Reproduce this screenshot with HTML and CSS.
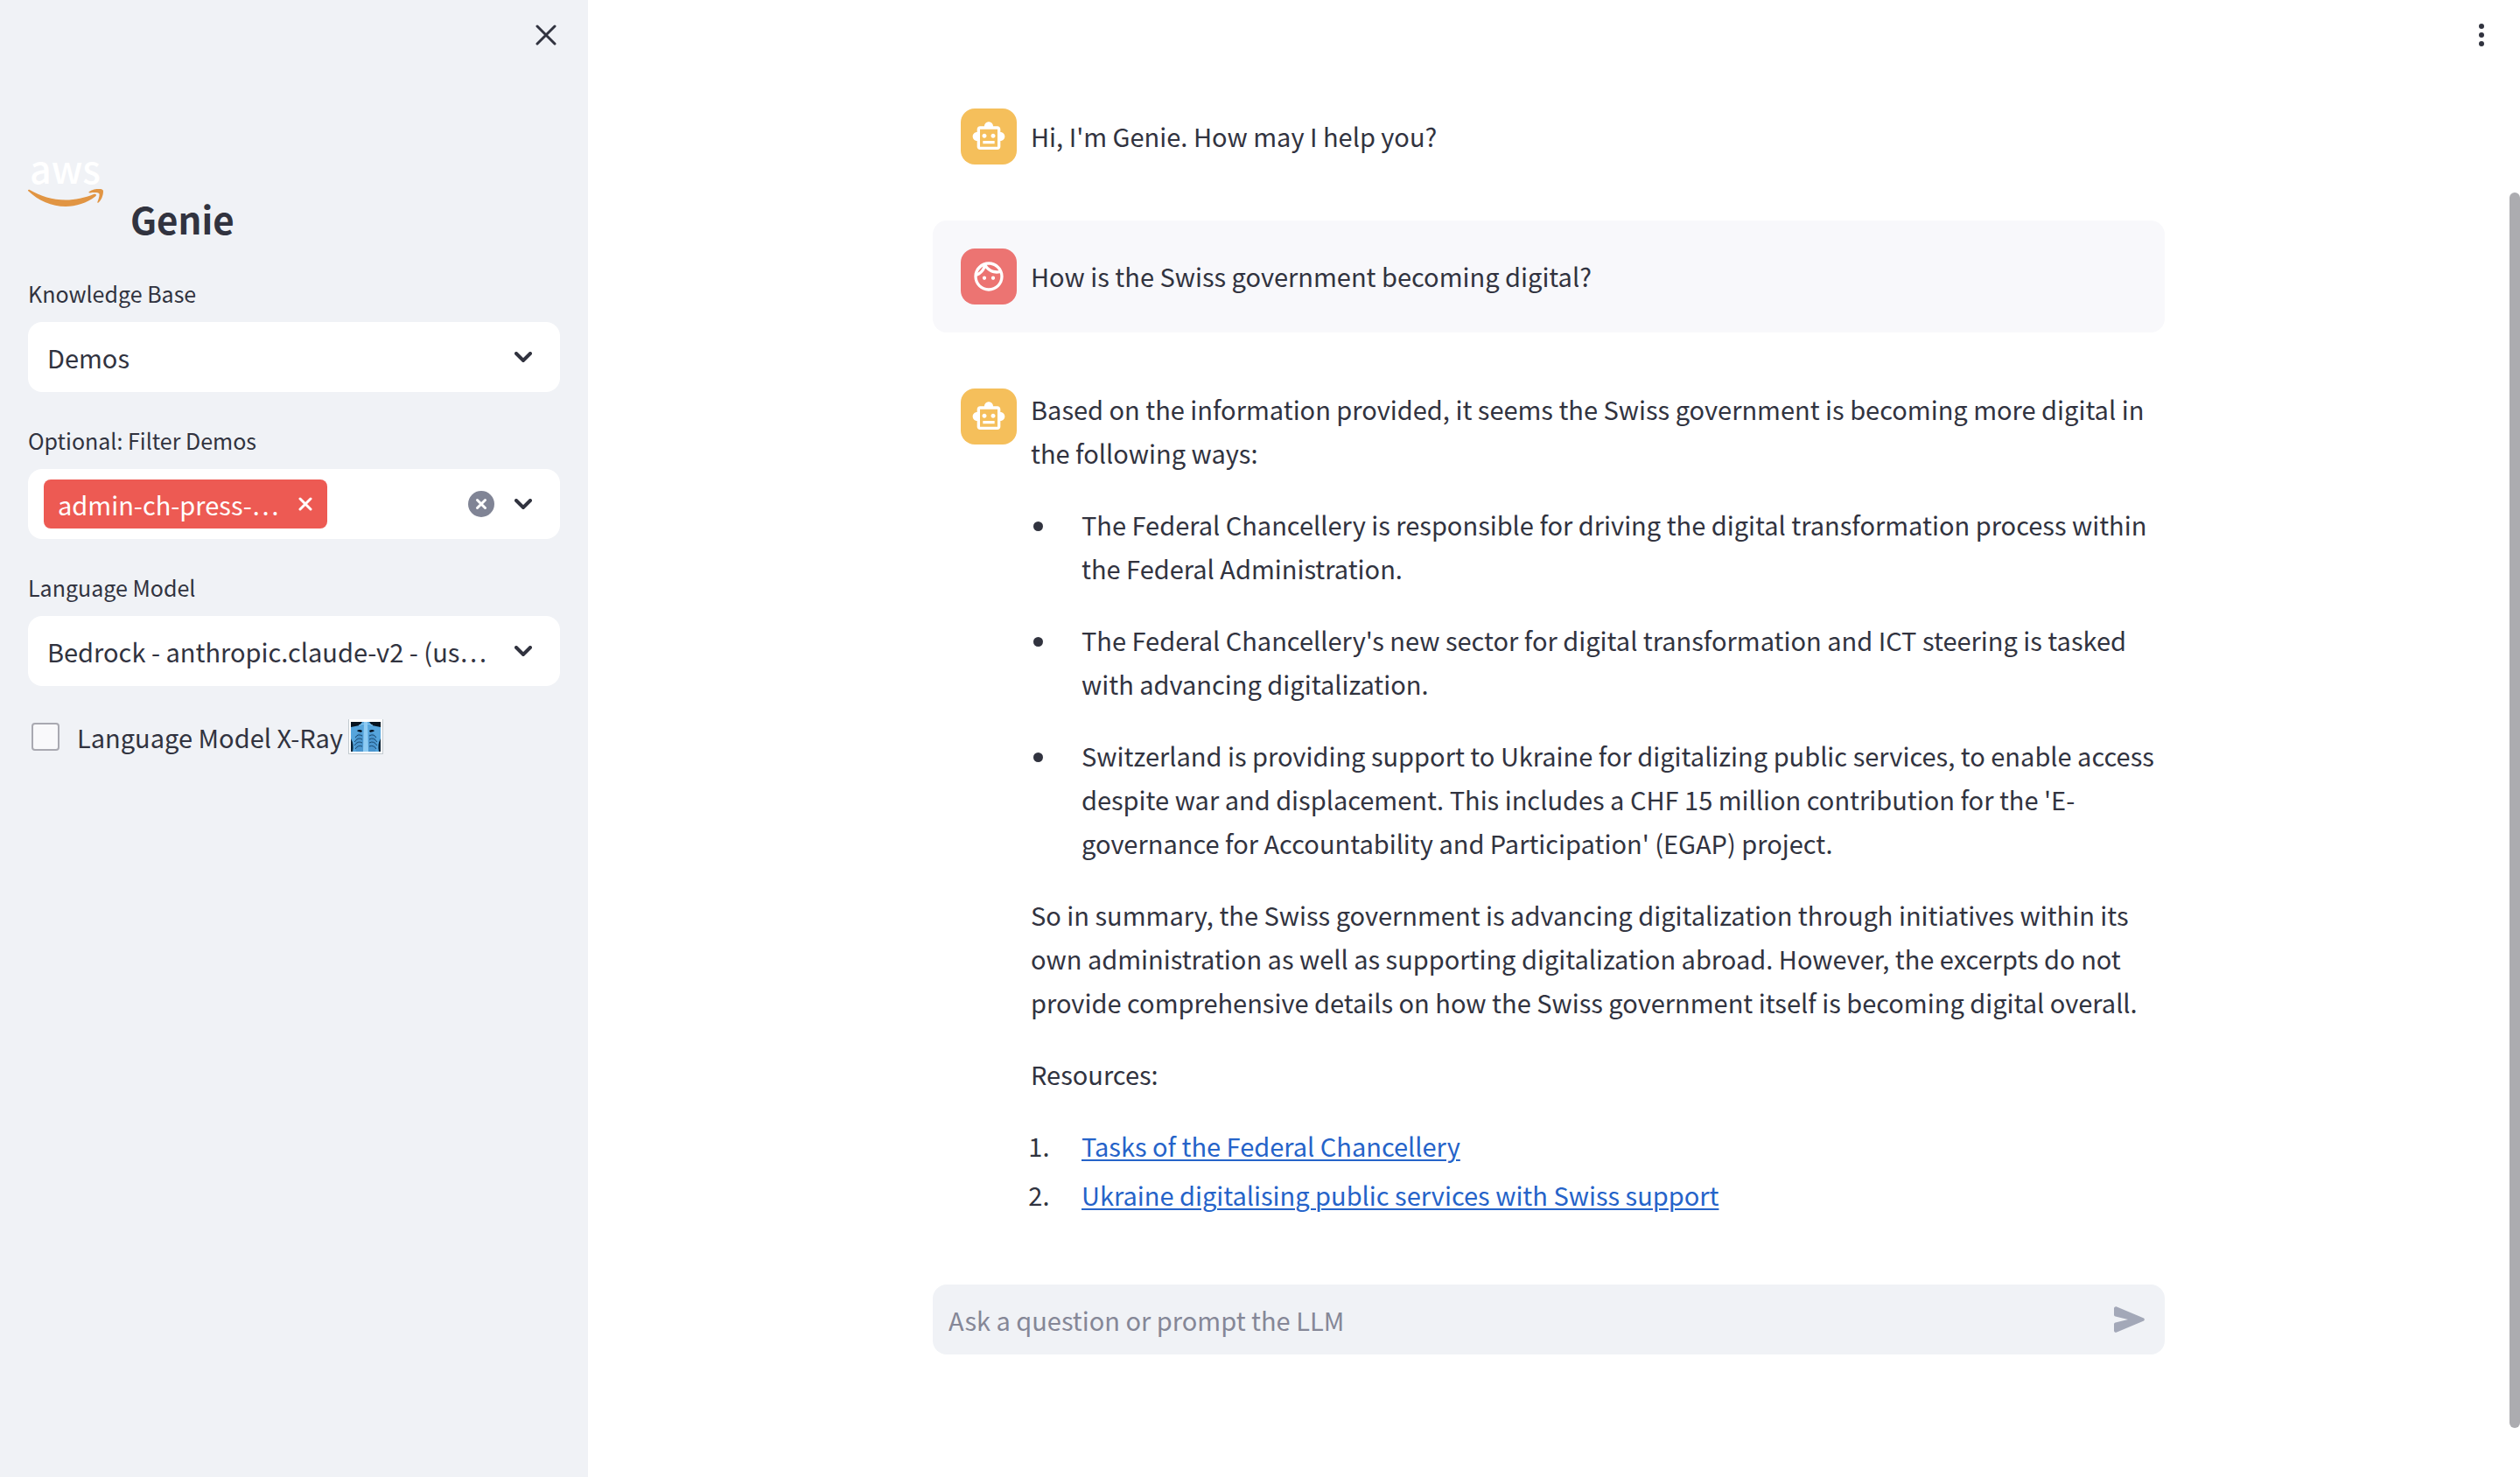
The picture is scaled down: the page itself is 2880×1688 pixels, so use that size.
FILE: index.html
```html
<!DOCTYPE html>
<html lang="en">
<head>
<meta charset="utf-8">
<meta name="viewport" content="width=device-width, initial-scale=1">
<title>Genie</title>
<link rel="stylesheet" href="styles.css">
</head>
<body>
<svg class="sprite" aria-hidden="true">
  <symbol id="bot" viewBox="0 0 24 24"><path d="M20 9V7c0-1.100-.9-2-2-2h-3c0-1.660-1.340-3-3-3S9 3.340 9 5H6c-1.100 0-2 .9-2 2v2c-1.660 0-3 1.340-3 3s1.340 3 3 3v4c0 1.100.9 2 2 2h12c1.100 0 2-.9 2-2v-4c1.660 0 3-1.340 3-3s-1.340-3-3-3zm-2 10H6V7h12v12zm-9-6c-.830 0-1.500-.670-1.500-1.500S8.170 10 9 10s1.500.670 1.500 1.500S9.830 13 9 13zm7.500-1.500c0 .830-.670 1.500-1.500 1.500s-1.500-.670-1.500-1.500.670-1.500 1.500-1.500 1.500.670 1.500 1.500zM8 15h8v2H8v-2z"/></symbol>
  <symbol id="face" viewBox="0 0 24 24"><path d="M10.250 13c0 .690-.560 1.250-1.250 1.250S7.750 13.690 7.750 13s.560-1.250 1.250-1.250 1.250.560 1.250 1.250zM15 11.750c-.690 0-1.250.560-1.250 1.250s.560 1.250 1.250 1.250 1.250-.560 1.250-1.250-.560-1.250-1.250-1.250zm7 .250c0 5.520-4.480 10-10 10S2 17.520 2 12 6.480 2 12 2s10 4.480 10 10zM10.660 4.120C12.060 6.440 14.600 8 17.500 8c.460 0 .910-.050 1.340-.120C17.440 5.560 14.900 4 12 4c-.460 0-.910.050-1.340.120zM4.420 9.470c1.710-.970 3.030-2.550 3.660-4.440C6.370 6 5.050 7.580 4.420 9.470zM20 12c0-.780-.120-1.530-.330-2.240-.700.150-1.420.240-2.170.240-3.130 0-5.920-1.440-7.760-3.690C8.690 8.870 6.600 10.880 4 11.860c.010.040 0 .090 0 .140 0 4.410 3.590 8 8 8s8-3.590 8-8z"/></symbol>
  <symbol id="chevron" viewBox="0 0 20 12"><path d="M2 2l8 8 8-8" fill="none" stroke="currentColor" stroke-width="4" stroke-linecap="round" stroke-linejoin="miter"/></symbol>
</svg>
<div class="app">
  <aside class="sidebar">
    <div class="sidebar-top">
      <button class="icon-button" type="button" aria-label="Close sidebar">
        <svg width="24" height="24" viewBox="0 0 24 24"><path d="M2 2l20 20M22 2L2 22" fill="none" stroke="currentColor" stroke-width="3" stroke-linecap="round"/></svg>
      </button>
    </div>
    <div class="brand">
      <div class="logo">
        <span class="logo-word">aws</span>
        <svg class="logo-smile" width="88" height="22" viewBox="0 0 88 22" aria-hidden="true"><path d="M0 2C-.3 1 .8.200 2 1C14 8 28 12.500 43 12.500C54 12.500 65 10 75 6C77.500 5 79 7 77 8.500C67 16 55 20 43 20C27 20 12 13.500 0 2zM70 3C73 .5 78 0 81 0C84 0 86 .6 86 2.500C86 8 83.500 13 80.500 15.500C79.500 16 79 15.500 79.500 14.500C80.500 12 82 7.500 81.500 5.500C80.500 3.700 75 4 71 4.400C69.500 4.500 69 3.700 70 3z" fill="#e19543"/></svg>
      </div>
      <h2 class="brand-name">Genie</h2>
    </div>
    <form class="settings">
      <div class="field">
        <label class="field-label" for="kb">Knowledge Base</label>
        <div class="control">
          <select class="select" id="kb"><option>Demos</option></select>
          <svg class="chevron" width="20" height="12"><use href="#chevron"/></svg>
        </div>
      </div>
      <div class="field">
        <label class="field-label" for="filter">Optional: Filter Demos</label>
        <div class="control control-tags">
          <span class="tag"><span class="tag-text">admin-ch-press-…</span>
            <button class="tag-remove" type="button" aria-label="Remove"><svg width="16" height="16" viewBox="0 0 16 16"><path d="M2 2l12 12M14 2L2 14" fill="none" stroke="currentColor" stroke-width="3" stroke-linecap="round"/></svg></button>
          </span>
          <input class="tag-input" id="filter" type="text">
          <button class="clear" type="button" aria-label="Clear all"><svg width="30" height="30" viewBox="0 0 30 30"><circle cx="15" cy="15" r="15" fill="#808495"/><path d="M10.500 10.500l9 9M19.500 10.500l-9 9" fill="none" stroke="#fff" stroke-width="3" stroke-linecap="round"/></svg></button>
          <svg class="chevron" width="20" height="12"><use href="#chevron"/></svg>
        </div>
      </div>
      <div class="field">
        <label class="field-label" for="model">Language Model</label>
        <div class="control">
          <select class="select" id="model"><option>Bedrock - anthropic.claude-v2 - (us…</option></select>
          <svg class="chevron" width="20" height="12"><use href="#chevron"/></svg>
        </div>
      </div>
      <div class="check-row">
        <input class="checkbox" type="checkbox" id="xray">
        <label class="check-label" for="xray">Language Model X-Ray
          <svg class="xray" width="40" height="40" viewBox="0 0 40 40" aria-hidden="true">
            <rect width="40" height="40" fill="#c3cbd0"/><rect x="1" width="38" height="39" fill="#fff"/>
            <rect x="3" y="3" width="34" height="34" fill="#06131f"/>
            <path d="M3 9l10-2 3-4h8l3 4 10 2v28H3z" fill="#56a5dc"/>
            <path d="M3 22q4 7 2 15H3zM37 22q-4 7-2 15h2z" fill="#0b2438"/>
            <path d="M10 17q4-3 7 1v19H9q-3-12 1-20zM30 17q-4-3-7 1v19h8q3-12-1-20z" fill="#4a96cf"/>
            <path d="M16 19q-5-3-8 2M16 23q-5-3-9 3M16 27q-5-3-9 3M16 31q-5-2-8 3M24 19q5-3 8 2M24 23q5-3 9 3M24 27q5-3 9 3M24 31q5-2 8 3" fill="none" stroke="#1b4a70" stroke-width="1"/>
            <path d="M10 13q3-2 6 0l-1 2-4-1zM30 13q-3-2-6 0l1 2 4-1z" fill="#041020"/>
            <path d="M18 3h4l1 34h-6z" fill="#8ecbf3"/><path d="M12 7q8-4 16 0" fill="none" stroke="#8ecbf3"/>
          </svg>
        </label>
      </div>
    </form>
  </aside>
  <main class="main">
    <header class="topbar">
      <button class="icon-button" type="button" aria-label="Menu">
        <svg width="24" height="28" viewBox="0 0 24 28" fill="currentColor"><circle cx="12" cy="4" r="3"/><circle cx="12" cy="14" r="3"/><circle cx="12" cy="24" r="3"/></svg>
      </button>
    </header>
    <div class="chat">
      <article class="message">
        <div class="avatar avatar-bot"><svg width="40" height="40"><use href="#bot"/></svg></div>
        <div class="body body-single"><p>Hi, I'm Genie. How may I help you?</p></div>
      </article>
      <article class="message message-user">
        <div class="avatar avatar-user"><svg width="40" height="40"><use href="#face"/></svg></div>
        <div class="body body-single"><p>How is the Swiss government becoming digital?</p></div>
      </article>
      <article class="message">
        <div class="avatar avatar-bot"><svg width="40" height="40"><use href="#bot"/></svg></div>
        <div class="body">
          <p>Based on the information provided, it seems the Swiss government is becoming more digital in the following ways:</p>
          <ul class="points">
            <li>The Federal Chancellery is responsible for driving the digital transformation process within the Federal Administration.</li>
            <li>The Federal Chancellery's new sector for digital transformation and ICT steering is tasked with advancing digitalization.</li>
            <li>Switzerland is providing support to Ukraine for digitalizing public services, to enable access despite war and displacement. This includes a CHF 15 million contribution for the 'E-governance for Accountability and Participation' (EGAP) project.</li>
          </ul>
          <p>So in summary, the Swiss government is advancing digitalization through initiatives within its own administration as well as supporting digitalization abroad. However, the excerpts do not provide comprehensive details on how the Swiss government itself is becoming digital overall.</p>
          <p>Resources:</p>
          <ol class="resources">
            <li><a href="#">Tasks of the Federal Chancellery</a></li>
            <li><a href="#">Ukraine digitalising public services with Swiss support</a></li>
          </ol>
        </div>
      </article>
    </div>
    <form class="prompt">
      <input class="prompt-input" type="text" placeholder="Ask a question or prompt the LLM" aria-label="Ask a question or prompt the LLM">
      <button class="send" type="button" aria-label="Send">
        <svg width="36" height="30" viewBox="0 0 36 30"><path d="M0 2.500C0 .7 1.500-.3 3.200.400L33.500 13.200C35.300 14 35.300 16 33.500 16.800L3.200 29.600C1.500 30.300 0 29.300 0 27.500V20.500C0 19.500.6 18.800 1.600 18.600L16 15L1.600 11.400C.6 11.200 0 10.500 0 9.500z" fill="#a3a8b8"/></svg>
      </button>
    </form>
    <div class="scroll-thumb"></div>
  </main>
</div>
</body>
</html>
```
FILE: styles.css
```css
* { box-sizing: border-box; }
body {
  margin: 0;
  background: #fff;
  color: #31333f;
  font: 29px/50px "Noto Sans CJK KR", "Noto Sans", sans-serif;
}
button, input, select { font: inherit; color: inherit; }
button { border: 0; padding: 0; background: none; cursor: pointer; }
svg { display: block; }
.sprite { position: absolute; width: 0; height: 0; }

.app { display: flex; min-height: 100vh; }
.sidebar { flex: 0 0 672px; min-width: 0; padding: 0 32px; background: #f0f2f6; }
.sidebar-top, .topbar { display: flex; justify-content: flex-end; align-items: center; height: 80px; }
.sidebar-top { padding-right: 4px; }
.topbar { padding-right: 20px; }
.icon-button { display: block; }

.brand { display: flex; align-items: flex-start; gap: 31px; margin-top: 96px; }
.logo { width: 86px; }
.logo-word {
  display: block;
  height: 40px;
  padding-left: 2px;
  color: #fff;
  font: 500 43px/30px "Noto Sans CJK KR", sans-serif;
}
.brand-name { margin: 40px 0 0; font-size: 42px; line-height: 68px; font-weight: 700; }

.settings { margin-top: 29px; }
.field { margin-bottom: 33px; }
.field-label { display: block; margin-bottom: 11px; font-size: 25px; line-height: 44px; }
.control {
  display: flex;
  align-items: center;
  position: relative;
  height: 80px;
  border-radius: 16px;
  background: #fff;
}
.select {
  width: 100%;
  min-width: 0;
  height: 80px;
  padding: 0 76px 0 22px;
  border: 0;
  border-radius: 16px;
  background: transparent;
  appearance: none;
}
.chevron { position: absolute; right: 32px; top: 34px; pointer-events: none; }
.control-tags { padding: 0 75px 0 18px; }
.tag {
  display: flex;
  align-items: center;
  gap: 22px;
  height: 56px;
  padding: 0 17px 0 16px;
  border-radius: 8px;
  background: #ed5a53;
  color: #fff;
  white-space: nowrap;
}
.tag-input { flex: 1; min-width: 0; border: 0; outline: 0; background: none; }
.check-row { display: flex; align-items: center; gap: 20px; padding-left: 4px; }
.checkbox {
  width: 32px;
  height: 32px;
  margin: 0;
  border: 2px solid #a9a9b1;
  border-radius: 4px;
  background: #f9f9fb;
  appearance: none;
}
.check-label { display: flex; align-items: center; gap: 6px; }

.main { position: relative; flex: 1; min-width: 0; padding: 0 12px 140px 0; }
.chat, .prompt { width: 100%; max-width: 1408px; margin: 0 auto; }
.chat { display: flex; flex-direction: column; gap: 32px; padding-top: 12px; }
.message { display: flex; gap: 16px; padding: 32px 8px 32px 32px; border-radius: 16px; }
.message-user { background: #f8f8fb; }
.avatar {
  display: grid;
  place-items: center;
  flex: none;
  width: 64px;
  height: 64px;
  border-radius: 16px;
  fill: #fff;
}
.avatar-bot { background: #f5bf5b; }
.avatar-user { background: #ec7472; }
.body { flex: 1; min-width: 0; margin-top: -2px; }
.body-single { align-self: center; }
.body p { margin: 0 0 32px; }
.body-single p { margin: 0; }
.points, .resources { margin: 0; }
.points { padding-left: 32px; }
.points li { margin-bottom: 32px; padding-left: 26px; }
.resources { padding-left: 28px; }
.resources li { padding-left: 30px; }
.resources li + li { margin-top: 6px; }
a { color: #2563c9; text-decoration: underline; text-underline-offset: 3px; text-decoration-thickness: 2px; }

.prompt {
  display: flex;
  align-items: center;
  height: 80px;
  margin-top: 46px;
  padding: 0 22px 0 18px;
  border-radius: 16px;
  background: #f0f2f6;
}
.prompt-input { flex: 1; min-width: 0; padding: 0; border: 0; outline: 0; background: none; }
.prompt-input::placeholder { color: #858797; opacity: 1; }
.scroll-thumb {
  position: absolute;
  top: 220px;
  right: 0;
  bottom: 56px;
  width: 12px;
  border-radius: 6px;
  background: #acacb0;
}
```
